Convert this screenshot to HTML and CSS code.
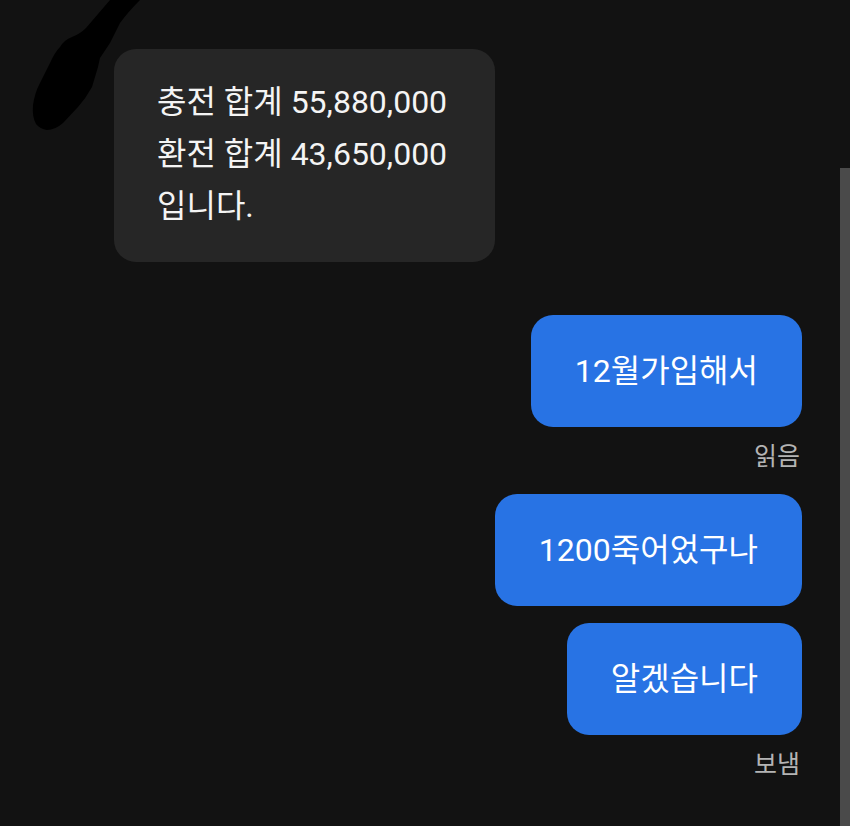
FILE: index.html
```html
<!DOCTYPE html>
<html lang="ko">
<head>
<meta charset="UTF-8">
<title>채팅</title>
<link rel="stylesheet" href="styles.css">
</head>
<body>
	<svg class="smudge" width="150" height="140" viewBox="0 0 150 140">
		<path d="M110 0 L140 0 Q128 12 120 23 L110 43 L100 58 L98 67 L92 87 Q86 98 78 107 L63 123 Q55 130 47 130 Q40 129 36 124 Q32 117 33 105 Q35 92 40 83 L50 63 Q55 52 60 47 Q64 40 72 37 Q80 34 86 28 Z" fill="#000"/>
	</svg>
	<div class="scrollbar"></div>
	<div class="chat">
		<div class="bubble received">충전 합계 55,880,000<br>환전 합계 43,650,000<br>입니다.</div>
		<div class="bubble sent">12월가입해서</div>
		<div class="status">읽음</div>
		<div class="bubble sent">1200죽어었구나</div>
		<div class="bubble sent">알겠습니다</div>
		<div class="status">보냄</div>
	</div>
</body>
</html>
```

FILE: styles.css
```css
* {
	margin: 0;
	padding: 0;
	box-sizing: border-box;
}
html, body {
	height: 100%;
}
body {
	background-color: #121212;
	font-family: Roboto, "Noto Sans CJK KR", sans-serif;
	color: #f4f4f4;
	overflow: hidden;
}
.smudge {
	position: absolute;
	left: 0;
	top: 0;
}
.scrollbar {
	position: absolute;
	right: 0;
	top: 168px;
	bottom: 0;
	width: 10px;
	background-color: #4a4a4a;
}
.chat {
	display: flex;
	flex-direction: column;
	gap: 17px;
	padding: 49px 48px 0 114px;
}
.bubble {
	font-size: 32px;
	border-radius: 22px;
	width: fit-content;
}
.received {
	background-color: #262626;
	line-height: 52px;
	padding: 27px 48px 30px 43px;
	margin-bottom: 36px;
}
.sent {
	align-self: flex-end;
	background-color: #2873e4;
	line-height: 40px;
	padding: 36px 44px;
	color: #fff;
}
.status {
	align-self: flex-end;
	font-size: 25px;
	line-height: 40px;
	color: #b4b4b4;
	margin-top: -7px;
	padding-right: 2px;
}
```
